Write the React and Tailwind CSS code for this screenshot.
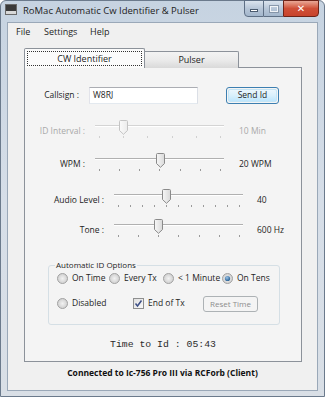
import React from "react";

const F = { fontFamily: '"Open Sans", "Noto Sans", sans-serif' };

function Thumb({ disabled }) {
  const stroke = disabled ? "#c4c4c4" : "#8a8a8a";
  return (
    <svg width="9" height="15" viewBox="0 0 9 15" className="block">
      <defs>
        <linearGradient id={disabled ? "tgd" : "tg"} x1="0" y1="0" x2="1" y2="0">
          <stop offset="0" stopColor={disabled ? "#fafafa" : "#f7f7f7"} />
          <stop offset="1" stopColor={disabled ? "#ececec" : "#d9d9d9"} />
        </linearGradient>
      </defs>
      <path
        d="M1.5 0.5 H7.5 Q8.5 0.5 8.5 1.5 V10.5 L4.5 14.3 L0.5 10.5 V1.5 Q0.5 0.5 1.5 0.5 Z"
        fill={`url(#${disabled ? "tgd" : "tg"})`}
        stroke={stroke}
        strokeWidth="1"
      />
    </svg>
  );
}

function Slider({ ticks, index, disabled }) {
  const span = 122;
  const left = 4 + (index * span) / (ticks - 1) - 4.5;
  const tickColor = disabled ? "#d0d0d0" : "#9a9a9a";
  return (
    <div className="relative w-[129px] h-[20px]">
      <div className="absolute left-0 right-0 top-[5px] h-[2px] border-t border-[#b0b0b0] border-b border-b-[#ffffff]" style={disabled ? { borderTopColor: "#d4d4d4" } : undefined} />
      <div className="absolute left-[4px] right-[3px] top-[16px] flex justify-between">
        {Array.from({ length: ticks }).map((_, i) => (
          <div key={i} className="w-px h-[2px]" style={{ background: tickColor }} />
        ))}
      </div>
      <div className="absolute top-0" style={{ left }}>
        <Thumb disabled={disabled} />
      </div>
    </div>
  );
}

function SliderRow({ label, labelW, value, ticks, index, disabled, gapV, className }) {
  const col = disabled ? "text-[#a9a9a9]" : "text-[#1e1e1e]";
  return (
    <div className={`flex items-start ${className}`}>
      <div className={`h-[20px] pt-[3px] flex items-center justify-end pr-[10px] text-[8.5px] ${col}`} style={{ width: labelW }}>
        {label}
      </div>
      <Slider ticks={ticks} index={index} disabled={disabled} />
      <div className={`h-[20px] pt-[3px] flex items-center text-[8.5px] ${col}`} style={{ marginLeft: gapV }}>
        {value}
      </div>
    </div>
  );
}

function Radio({ checked }) {
  return (
    <svg width="11" height="11" viewBox="0 0 11 11" className="block shrink-0">
      <defs>
        <radialGradient id="rg" cx="0.5" cy="0.5" r="0.6">
          <stop offset="0" stopColor="#f2f2f2" />
          <stop offset="1" stopColor="#c8c8c8" />
        </radialGradient>
        <radialGradient id="rd" cx="0.4" cy="0.35" r="0.7">
          <stop offset="0" stopColor="#9cc3e6" />
          <stop offset="1" stopColor="#1f5a8f" />
        </radialGradient>
      </defs>
      <circle cx="5.5" cy="5.5" r="5" fill="url(#rg)" stroke="#a2a2a2" strokeWidth="1" />
      {checked && <circle cx="5.5" cy="5.5" r="2.6" fill="url(#rd)" />}
    </svg>
  );
}

function RadioItem({ label, checked, w }) {
  return (
    <div className="flex items-center shrink-0" style={{ width: w }}>
      <Radio checked={checked} />
      <span className="ml-[4px] text-[8.5px] text-[#1e1e1e] whitespace-nowrap">{label}</span>
    </div>
  );
}

export default function App() {
  return (
    <div style={F} className="w-[325px] h-[397px] overflow-hidden">
      <div className="w-[325px] h-[397px] rounded-t-[6px] border border-[#6b7a8c] bg-gradient-to-b from-[#c6d3e1] via-[#d6dee8] to-[#d9dfe6] flex flex-col">
        {/* Title bar */}
        <div className="h-[20px] flex items-start relative">
          <div className="ml-[4px] mt-[3px] w-[12px] h-[11px] bg-[#3a3a3a] border border-[#6a6a6a] flex flex-col justify-end">
            <div className="h-[3px] bg-[#d8d8d8]" />
          </div>
          <div className="ml-[6px] mt-[4px] text-[9.5px] leading-[12px] text-[#222]">RoMac Automatic Cw Identifier &amp; Pulser</div>
          <div className="absolute right-[5px] top-[-1px] flex">
            <div className="w-[20px] h-[17px] rounded-bl-[4px] border border-[#5e6f85] bg-gradient-to-b from-[#dbe4ee] via-[#b7c6d8] to-[#a3b6cc] flex items-center justify-center">
              <div className="w-[8px] h-[3px] bg-white border border-[#4a5a6e] mt-[4px]" />
            </div>
            <div className="w-[19px] h-[17px] border-y border-[#5e6f85] bg-gradient-to-b from-[#dbe4ee] via-[#b7c6d8] to-[#a3b6cc] flex items-center justify-center">
              <div className="w-[8px] h-[6px] border border-white outline outline-1 outline-[#7c8ca0] opacity-80" />
            </div>
            <div className="w-[36px] h-[17px] rounded-br-[4px] border border-[#6e2318] bg-gradient-to-b from-[#e8a796] via-[#cf4f37] to-[#c8432c] flex items-center justify-center">
              <span className="text-white font-bold text-[10px] leading-none" style={{ fontFamily: '"DejaVu Sans", sans-serif' }}>✕</span>
            </div>
          </div>
        </div>

        {/* Client */}
        <div className="mx-[6px] h-[369px] mt-[1px] border border-[#9aa8b8] bg-[#f0f0f0] flex flex-col">
          {/* Menu */}
          <div className="h-[18px] flex items-center pl-[8px] text-[9px] text-[#1e1e1e]">
            <div className="w-[28px]">File</div>
            <div className="w-[46px]">Settings</div>
            <div>Help</div>
          </div>

          {/* Tabs */}
          <div className="ml-[16px] mt-[7px] flex items-start h-[20px] relative z-10">
            <div className="w-[121px] h-[20px] bg-[#fbfbfb] border border-b-0 border-[#8c929a] rounded-t-[2px] p-[2px]">
              <div className="h-full border border-dotted border-[#333] flex items-center justify-center text-[9px] text-[#1e1e1e]">
                CW Identifier
              </div>
            </div>
            <div className="w-[94px] h-[17px] mt-[3px] border border-l-0 border-b-0 border-[#8c929a] rounded-tr-[2px] bg-gradient-to-b from-[#f3f3f3] via-[#ebebeb] to-[#d9d9d9] flex items-center justify-center text-[9px] text-[#1e1e1e]">
              Pulser
            </div>
          </div>

          {/* Panel */}
          <div className="ml-[16px] w-[278px] h-[295px] -mt-[1px] border border-[#8c929a] bg-[#f4f4f4] flex flex-col">
            {/* Callsign row */}
            <div className="mt-[19px] flex items-center h-[17px]">
              <div className="w-[64px] text-right pr-[10px] text-[8.5px] text-[#1e1e1e]">Callsign :</div>
              <div className="w-[109px] h-[17px] bg-white border border-[#abadb3] border-l-[#e2e3ea] border-r-[#dbdfe6] border-b-[#e3e9ef] flex items-center pl-[3px] text-[8.5px] text-[#1e1e1e]">
                W8RJ
              </div>
              <div className="ml-[28px] w-[53px] h-[17px] rounded-[3px] border border-[#3c7fb1] p-px">
                <div className="w-full h-full rounded-[2px] bg-gradient-to-b from-[#eaf6fd] via-[#d9f0fc] to-[#bee6fd] border border-[#c4e5f6] flex items-center justify-center text-[8.5px] text-[#1e1e1e]">
                  Send Id
                </div>
              </div>
            </div>

            <SliderRow className="mt-[16px]" label="ID Interval :" labelW={70} value="10 Min" ticks={6} index={1} disabled gapV={15} />
            <SliderRow className="mt-[13px]" label="WPM :" labelW={70} value="20 WPM" ticks={7} index={3} gapV={15} />
            <SliderRow className="mt-[16px]" label="Audio Level :" labelW={89} value="40" ticks={11} index={4} gapV={14} />
            <SliderRow className="mt-[10px]" label="Tone :" labelW={89} value="600 Hz" ticks={7} index={2} gapV={14} />

            {/* Group box */}
            <div className="ml-[23px] mt-[26px] w-[232px] h-[60px] border border-[#d5dfe5] rounded-[3px] relative flex flex-col">
              <div className="absolute -top-[7px] left-[6px] px-[1px] bg-[#f4f4f4] text-[8px] leading-[12px] text-[#1e1e1e]">
                Automatic ID Options
              </div>
              <div className="flex items-center mt-[6px] ml-[8px]">
                <RadioItem label="On Time" w={52} />
                <RadioItem label="Every Tx" w={54} />
                <RadioItem label="< 1 Minute" w={59} />
                <RadioItem label="On Tens" checked />
              </div>
              <div className="flex items-center mt-[11px] ml-[8px]">
                <RadioItem label="Disabled" w={76} />
                <div className="flex items-center w-[70px] shrink-0">
                  <div className="w-[11px] h-[11px] border border-[#8e8f8f] bg-gradient-to-br from-[#e0e0e0] to-[#fafafa] flex items-center justify-center">
                    <svg width="9" height="9" viewBox="0 0 9 9">
                      <path d="M1.5 4.5 L3.5 7 L7.5 1.5" fill="none" stroke="#3c4f86" strokeWidth="1.5" />
                    </svg>
                  </div>
                  <span className="ml-[4px] text-[8.5px] text-[#1e1e1e]">End of Tx</span>
                </div>
                <div className="w-[55px] h-[16px] shrink-0 rounded-[3px] border border-[#adb2b5] bg-[#f4f4f4] flex items-center justify-center text-[8px] text-[#8d8d8d]">
                  Reset Time
                </div>
              </div>
            </div>

            <div className="mt-[13px] text-center text-[9.8px] leading-[14px] text-[#2a2a2a]" style={{ fontFamily: '"Liberation Mono", monospace' }}>
              Time to Id : 05:43
            </div>
          </div>

          {/* Status */}
          <div className="mt-[5px] text-center text-[8.5px] font-bold text-[#111]">
            Connected to Ic-756 Pro III via RCForb (Client)
          </div>
        </div>
      </div>
    </div>
  );
}
